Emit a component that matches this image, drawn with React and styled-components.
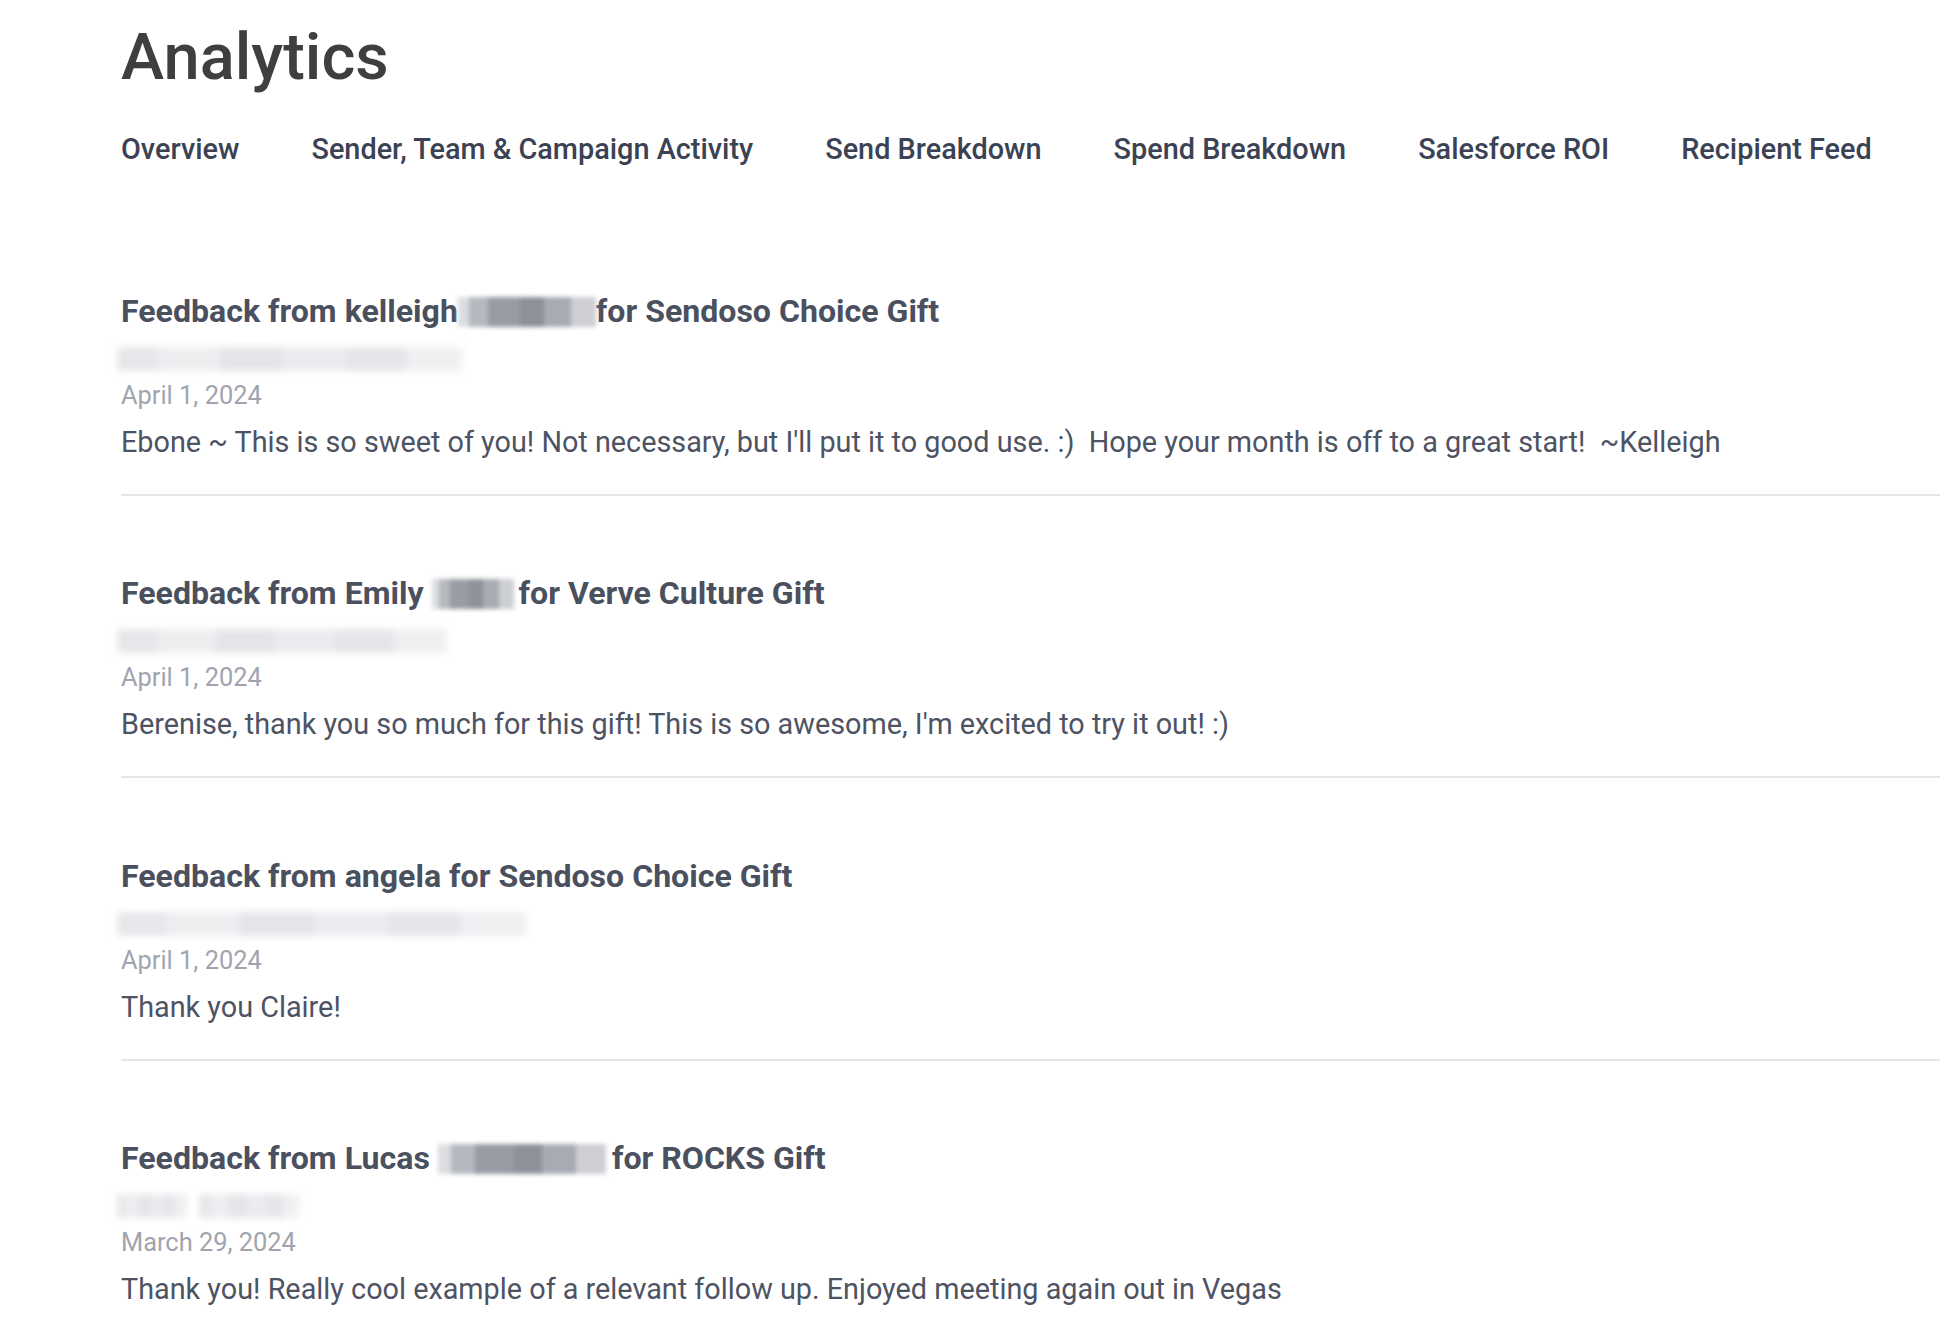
import React from 'react';
import styled, { createGlobalStyle } from 'styled-components';

const GlobalStyle = createGlobalStyle`
    html, body {
        margin: 0;
        padding: 0;
        background: #ffffff;
    }
    body {
        font-family: Roboto, "Liberation Sans", Arial, sans-serif;
        -webkit-font-smoothing: antialiased;
    }
`;

const Page = styled.div`
    padding: 19px 0 0 121px;
    overflow: hidden;
`;

const Title = styled.h1`
    margin: 0;
    font-size: 65px;
    line-height: 76px;
    font-weight: 500;
    color: #3f3f41;
`;

const Tabs = styled.nav`
    display: flex;
    gap: 72px;
    margin-top: 37px;
`;

const Tab = styled.span`
    font-size: 28.85px;
    line-height: 34px;
    font-weight: 500;
    color: #3b4254;
    white-space: nowrap;
`;

const FeedList = styled.div`
    margin-top: 47px;
`;

const FeedItem = styled.div`
    padding: 78.5px 0 34px;
    border-bottom: 2px solid #e6e6e8;
`;

const Heading = styled.div`
    font-size: 32.1px;
    line-height: 38px;
    font-weight: 700;
    color: #4a505e;
    white-space: nowrap;
`;

const NameBlur = styled.span`
    display: inline-block;
    width: ${p => p.w}px;
    height: 30px;
    margin: 0 ${p => p.gapRight || 0}px 0 ${p => p.gapLeft || 0}px;
    vertical-align: -5px;
    background: linear-gradient(90deg,
        #dcdde1 0 8%, #b5b8bf 8% 22%, #989ca5 22% 45%,
        #8d919a 45% 62%, #a8abb3 62% 82%, #cdcfd4 82% 100%);
    filter: blur(2px);
`;

const EmailBlur = styled.div`
    display: flex;
    gap: ${p => p.split ? 12 : 0}px;
    margin: 17px 0 0 -4px;
    height: 24px;
    filter: blur(3.5px);
`;

const EmailChunk = styled.div`
    width: ${p => p.w}px;
    height: 100%;
    background: linear-gradient(90deg,
        #e6e7ea 0 12%, #eceef0 12% 30%, #e4e5e8 30% 48%,
        #ebecef 48% 66%, #e5e6e9 66% 84%, #eef0f2 84% 100%);
`;

const DateLine = styled.div`
    margin-top: 8px;
    font-size: 25.4px;
    line-height: 32px;
    color: #9fa4ae;
`;

const Message = styled.div`
    margin-top: 13px;
    font-size: 28.8px;
    line-height: 36px;
    color: #4d5363;
    white-space: pre;
`;

const tabs = [
    'Overview',
    'Sender, Team & Campaign Activity',
    'Send Breakdown',
    'Spend Breakdown',
    'Salesforce ROI',
    'Recipient Feed'
];

const feed = [
    {
        name: 'kelleigh',
        blur: { w: 138, left: 0, right: 0 },
        gift: 'Sendoso Choice Gift',
        email: [345],
        date: 'April 1, 2024',
        message: "Ebone ~ This is so sweet of you! Not necessary, but I'll put it to good use. :)  Hope your month is off to a great start!  ~Kelleigh"
    },
    {
        name: 'Emily ',
        blur: { w: 82, left: 0, right: 5 },
        gift: 'Verve Culture Gift',
        email: [330],
        date: 'April 1, 2024',
        message: "Berenise, thank you so much for this gift! This is so awesome, I'm excited to try it out! :)"
    },
    {
        name: 'angela ',
        blur: null,
        gift: 'Sendoso Choice Gift',
        email: [410],
        date: 'April 1, 2024',
        message: 'Thank you Claire!'
    },
    {
        name: 'Lucas ',
        blur: { w: 168, left: 0, right: 6 },
        gift: 'ROCKS Gift',
        email: [70, 100],
        date: 'March 29, 2024',
        message: 'Thank you! Really cool example of a relevant follow up. Enjoyed meeting again out in Vegas'
    }
];

function FeedEntry({ item }) {
    const { name, blur, gift, email, date, message } = item;
    return (
        <FeedItem>
            <Heading>
                Feedback from {name}
                {blur && <NameBlur w={blur.w} gapLeft={blur.left} gapRight={blur.right} />}
                for {gift}
            </Heading>
            <EmailBlur split={email.length > 1}>
                {email.map((w, i) => <EmailChunk key={i} w={w} />)}
            </EmailBlur>
            <DateLine>{date}</DateLine>
            <Message>{message}</Message>
        </FeedItem>
    );
}

export default function App() {
    return (
        <Page>
            <GlobalStyle />
            <Title>Analytics</Title>
            <Tabs>
                {tabs.map(t => <Tab key={t}>{t}</Tab>)}
            </Tabs>
            <FeedList>
                {feed.map((item, i) => <FeedEntry key={i} item={item} />)}
            </FeedList>
        </Page>
    );
}
